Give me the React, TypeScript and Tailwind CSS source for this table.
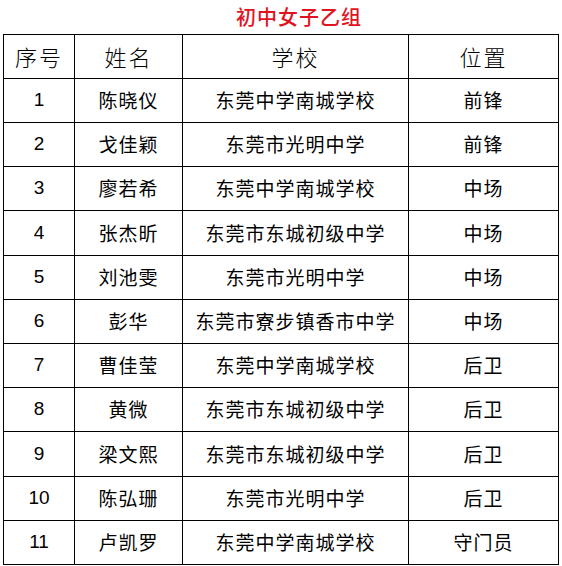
const rows = [
  ["1", "陈晓仪", "东莞中学南城学校", "前锋"],
  ["2", "戈佳颖", "东莞市光明中学", "前锋"],
  ["3", "廖若希", "东莞中学南城学校", "中场"],
  ["4", "张杰昕", "东莞市东城初级中学", "中场"],
  ["5", "刘池雯", "东莞市光明中学", "中场"],
  ["6", "彭华", "东莞市寮步镇香市中学", "中场"],
  ["7", "曹佳莹", "东莞中学南城学校", "后卫"],
  ["8", "黄微", "东莞市东城初级中学", "后卫"],
  ["9", "梁文熙", "东莞市东城初级中学", "后卫"],
  ["10", "陈弘珊", "东莞市光明中学", "后卫"],
  ["11", "卢凯罗", "东莞中学南城学校", "守门员"],
];

// a couple of rows are 1px taller so the grid lines land where the scan has them
const tall = new Set([3, 8]);

const cjk = "font-['Noto_Sans_CJK_SC',sans-serif]";

export default function App() {
  return (
    <div className="h-[566px] w-[562px] overflow-hidden bg-white">
      {/* Title */}
      <div className="flex h-[34px] items-center pl-[236px]">
        <span
          className={`${cjk} text-[20px] font-medium leading-none tracking-[1px] text-[#e0141e]`}
        >
          初中女子乙组
        </span>
      </div>

      {/* Roster table */}
      <div className="ml-[3px] grid w-[556px] grid-cols-[71px_108px_226px_150px] border-l border-t border-black">
        {["序号", "姓名", "学校", "位置"].map((h) => (
          <div
            key={h}
            className={`${cjk} flex h-[44px] items-center justify-center border-b border-r border-black text-[22px] font-light tracking-[2px] text-black`}
          >
            {h}
          </div>
        ))}
        {rows.map((r, i) =>
          r.map((cell, j) => (
            <div
              key={`${i}-${j}`}
              className={`flex items-center justify-center border-b border-r border-black text-black ${
                tall.has(i) ? "h-[45px]" : "h-[44px]"
              } ${
                j === 0
                  ? "font-['Liberation_Sans',Arial,sans-serif] text-[19px]"
                  : `${cjk} text-[19px] tracking-[1px]`
              }`}
            >
              {cell}
            </div>
          )),
        )}
      </div>
    </div>
  );
}
